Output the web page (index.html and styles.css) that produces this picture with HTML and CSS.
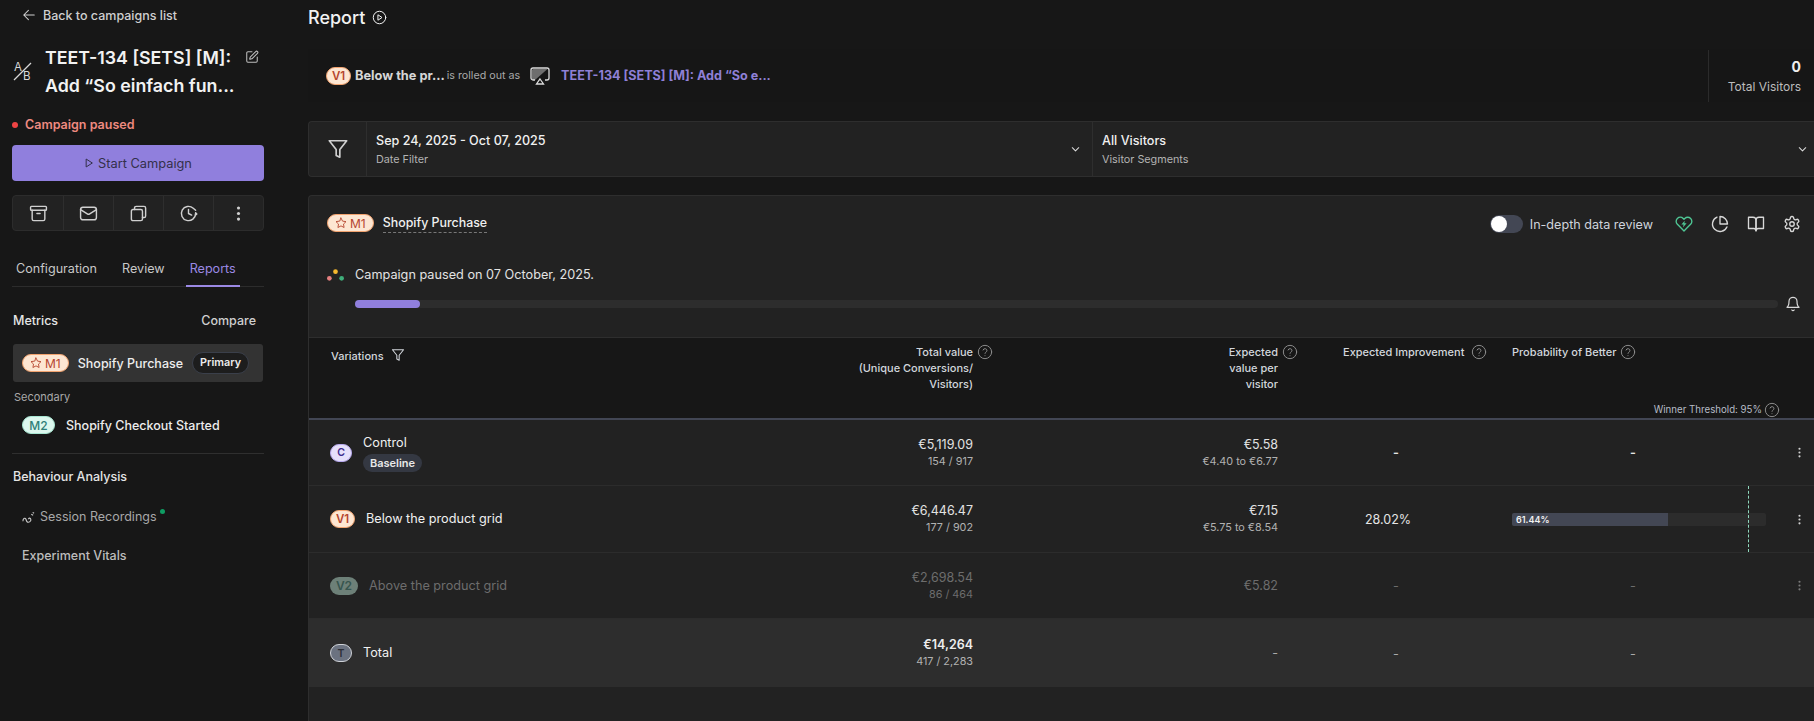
FILE: index.html
```html
<!DOCTYPE html>
<html lang="en">
<head>
  <meta charset="utf-8">
  <title>Report</title>
  <link rel="stylesheet" href="styles.css">
</head>
<body>
  <svg class="sprite" xmlns="http://www.w3.org/2000/svg">
    <symbol id="i-back" viewBox="0 0 24 24"><path d="M21 12H3M11 20l-8-8 8-8"/></symbol>
    <symbol id="i-edit" viewBox="0 0 24 24"><path d="M12 3H5a2 2 0 0 0-2 2v14a2 2 0 0 0 2 2h14a2 2 0 0 0 2-2v-7"/><path d="M18.375 2.625a1 1 0 0 1 3 3l-9.013 9.014a2 2 0 0 1-.853.505l-2.873.84a.5.5 0 0 1-.62-.62l.84-2.873a2 2 0 0 1 .506-.852z"/></symbol>
    <symbol id="i-tri" viewBox="0 0 12 12"><path d="M3 1.500 10 6l-7 4.500z"/></symbol>
    <symbol id="i-archive" viewBox="0 0 24 24"><path d="M3 3h18a1 1 0 0 1 1 1v3a1 1 0 0 1-1 1H3a1 1 0 0 1-1-1V4a1 1 0 0 1 1-1z"/><path d="M4 8v11a2 2 0 0 0 2 2h12a2 2 0 0 0 2-2V8"/><path d="M10 12h4"/></symbol>
    <symbol id="i-mail" viewBox="0 0 24 24"><rect x="2" y="4" width="20" height="16" rx="3"/><path d="m22 7-8.970 5.700a1.940 1.940 0 0 1-2.060 0L2 7"/></symbol>
    <symbol id="i-copy" viewBox="0 0 24 24"><rect x="3" y="7" width="14" height="14" rx="2"/><path d="M7 7V5a2 2 0 0 1 2-2h10a2 2 0 0 1 2 2v10a2 2 0 0 1-2 2h-2"/></symbol>
    <symbol id="i-history" viewBox="0 0 24 24"><path d="M21 12a9 9 0 1 1-3-6.700L21 8"/><path d="M12 7v5l4 2"/><path d="M21 11l1.500 1.500L21 14z"/></symbol>
    <symbol id="i-filter" viewBox="0 0 24 24"><path d="M2.500 3h19l-7.500 9.500V21l-4-2v-6.500z"/></symbol>
    <symbol id="i-chevron" viewBox="0 0 24 24"><path d="m5 8 7 7 7-7"/></symbol>
    <symbol id="i-play" viewBox="0 0 24 24"><circle cx="12" cy="12" r="10"/><path d="m10 8 6 4-6 4z"/></symbol>
    <symbol id="i-heart" viewBox="0 0 24 24"><path d="M20.840 4.610a5.500 5.500 0 0 0-7.780 0L12 5.670l-1.060-1.060a5.500 5.500 0 0 0-7.780 7.780l1.060 1.060L12 21.230l7.780-7.780 1.060-1.060a5.500 5.500 0 0 0 0-7.780z"/><path class="solid" d="M13 7.500 8.500 12.500h3L10.500 16.500l5-5.500h-3z"/></symbol>
    <symbol id="i-pie" viewBox="0 0 24 24"><path d="M21.210 15.890A10 10 0 1 1 8 2.830"/><path d="M22 12A10 10 0 0 0 12 2v10z"/></symbol>
    <symbol id="i-book" viewBox="0 0 24 24"><path d="M2 3h6a4 4 0 0 1 4 4v14a3 3 0 0 0-3-3H2z"/><path d="M22 3h-6a4 4 0 0 0-4 4v14a3 3 0 0 1 3-3h7z"/></symbol>
    <symbol id="i-gear" viewBox="0 0 24 24"><path d="M12.220 2h-.44a2 2 0 0 0-2 2v.18a2 2 0 0 1-1 1.730l-.43.25a2 2 0 0 1-2 0l-.15-.08a2 2 0 0 0-2.730.73l-.22.38a2 2 0 0 0 .73 2.730l.15.1a2 2 0 0 1 1 1.720v.51a2 2 0 0 1-1 1.740l-.15.09a2 2 0 0 0-.73 2.730l.22.38a2 2 0 0 0 2.730.73l.15-.08a2 2 0 0 1 2 0l.43.25a2 2 0 0 1 1 1.730V20a2 2 0 0 0 2 2h.44a2 2 0 0 0 2-2v-.18a2 2 0 0 1 1-1.730l.43-.25a2 2 0 0 1 2 0l.15.08a2 2 0 0 0 2.730-.73l.22-.39a2 2 0 0 0-.73-2.730l-.15-.08a2 2 0 0 1-1-1.740v-.5a2 2 0 0 1 1-1.740l.15-.09a2 2 0 0 0 .73-2.730l-.22-.38a2 2 0 0 0-2.730-.73l-.15.08a2 2 0 0 1-2 0l-.43-.25a2 2 0 0 1-1-1.730V4a2 2 0 0 0-2-2z"/><circle cx="12" cy="12" r="3"/></symbol>
    <symbol id="i-bell" viewBox="0 0 24 24"><path d="M6 8a6 6 0 0 1 12 0c0 7 3 9 3 9H3s3-2 3-9"/><path d="M10.300 21a1.940 1.940 0 0 0 3.400 0"/></symbol>
    <symbol id="i-help" viewBox="0 0 24 24"><circle cx="12" cy="12" r="10"/><path d="M9.090 9a3 3 0 0 1 5.830 1c0 2-3 2.500-3 4"/><path d="M12 17.500h.01"/></symbol>
    <symbol id="i-star" viewBox="0 0 24 24"><path d="M12 2l3.090 6.260L22 9.270l-5 4.870 1.180 6.880L12 17.770l-6.180 3.250L7 14.140 2 9.270l6.910-1.010z"/></symbol>
    <symbol id="i-dots" viewBox="0 0 24 24"><circle class="solid" cx="12" cy="5" r="2"/><circle class="solid" cx="12" cy="12" r="2"/><circle class="solid" cx="12" cy="19" r="2"/></symbol>
  </svg>

  <div class="app">
    <aside class="sidebar">
      <a class="back"><svg class="ico ico-14"><use href="#i-back"/></svg>Back to campaigns list</a>

      <div class="camp-title">
        <svg class="ab-icon" viewBox="0 0 20 20">
          <text x="1" y="10" class="ab-letter">A</text>
          <text x="10" y="19" class="ab-letter">B</text>
          <path d="M1 19 18 2"/>
        </svg>
        <h1>TEET-134 [SETS] [M]:<br>Add “So einfach fun...</h1>
        <svg class="ico ico-14 edit"><use href="#i-edit"/></svg>
      </div>

      <div class="status"><span class="status-dot"></span>Campaign paused</div>

      <button class="start"><svg class="ico ico-10"><use href="#i-tri"/></svg>Start Campaign</button>

      <div class="toolbar">
        <div><svg class="ico ico-19"><use href="#i-archive"/></svg></div>
        <div><svg class="ico ico-19"><use href="#i-mail"/></svg></div>
        <div><svg class="ico ico-19"><use href="#i-copy"/></svg></div>
        <div><svg class="ico ico-19"><use href="#i-history"/></svg></div>
        <div><svg class="ico ico-19"><use href="#i-dots"/></svg></div>
      </div>

      <nav class="tabs">
        <a>Configuration</a>
        <a>Review</a>
        <a class="active">Reports</a>
      </nav>

      <div class="metrics-head"><span>Metrics</span><span class="compare">Compare</span></div>

      <div class="metric-row selected">
        <span class="badge orange"><svg class="ico ico-12"><use href="#i-star"/></svg>M1</span>
        <span class="metric-name">Shopify Purchase</span>
        <span class="primary">Primary</span>
      </div>

      <div class="secondary">Secondary</div>
      <div class="metric-row second">
        <span class="badge mint">M2</span>
        <span class="metric-name plain">Shopify Checkout Started</span>
      </div>

      <div class="rule"></div>

      <div class="side-head">Behaviour Analysis</div>
      <div class="side-link">
        <svg class="squiggle" viewBox="0 0 14 14"><path d="M1 11c0-3 2-4 3-2.500s.5 3 2 3.500 4-1 3.500-3-2.500-1.500-2.500 0M10 3.500l2 1M11.500 1.500l1.500 1"/></svg>
        Session Recordings<span class="live-dot"></span>
      </div>
      <div class="side-link vitals">Experiment Vitals</div>
    </aside>

    <main class="content">
      <div class="page-title">Report <svg class="ico ico-15"><use href="#i-play"/></svg></div>

      <section class="rollout">
        <span class="badge orange small">V1</span>
        <b class="rollout-name">Below the pr...</b>
        <span class="rollout-as">is rolled out as</span>
        <svg class="airplay" viewBox="0 0 20 18">
          <path class="screen-fill" d="M3 2h14.500L5 13H3a1.500 1.500 0 0 1-1-1.500V3z"/>
          <path class="screen" d="M5 13H3a2 2 0 0 1-2-2V3a2 2 0 0 1 2-2h14a2 2 0 0 1 2 2v8a2 2 0 0 1-2 2h-2"/>
          <path class="screen" d="m10 12 3.500 5h-7z"/>
        </svg>
        <a class="rollout-link">TEET-134 [SETS] [M]: Add “So e...</a>
        <div class="visitors"><b>0</b><span>Total Visitors</span></div>
      </section>

      <section class="filters">
        <div class="filter-icon"><svg class="ico ico-22"><use href="#i-filter"/></svg></div>
        <div class="filter-cell date">
          <div><div class="filter-val">Sep 24, 2025 - Oct 07, 2025</div><div class="filter-lbl">Date Filter</div></div>
          <svg class="ico ico-11"><use href="#i-chevron"/></svg>
        </div>
        <div class="filter-cell seg">
          <div><div class="filter-val">All Visitors</div><div class="filter-lbl">Visitor Segments</div></div>
          <svg class="ico ico-11"><use href="#i-chevron"/></svg>
        </div>
      </section>

      <section class="report">
        <header class="report-head">
          <span class="badge orange"><svg class="ico ico-12"><use href="#i-star"/></svg>M1</span>
          <span class="report-name">Shopify Purchase</span>
          <div class="report-tools">
            <span class="toggle"><span class="knob"></span></span>
            <span class="toggle-lbl">In-depth data review</span>
            <svg class="ico ico-18 green"><use href="#i-heart"/></svg>
            <svg class="ico ico-18"><use href="#i-pie"/></svg>
            <svg class="ico ico-18"><use href="#i-book"/></svg>
            <svg class="ico ico-18"><use href="#i-gear"/></svg>
          </div>
        </header>

        <div class="paused-line">
          <svg class="dots3" viewBox="0 0 18 12"><circle cx="9" cy="2.500" r="2.500" fill="#f5b82e"/><circle cx="2.500" cy="9.500" r="2.500" fill="#e57f7f"/><circle cx="15.500" cy="9.500" r="2.500" fill="#3fae7a"/></svg>
          Campaign paused on 07 October, 2025.
        </div>
        <div class="progress-line">
          <div class="progress"><div class="progress-fill"></div></div>
          <svg class="ico ico-16"><use href="#i-bell"/></svg>
        </div>

        <div class="grid grid-head">
          <div class="th th-var">Variations <svg class="ico ico-14"><use href="#i-filter"/></svg></div>
          <div class="th num"><span class="th-main">Total value<br>(Unique Conversions/<br>Visitors)</span><svg class="ico ico-help"><use href="#i-help"/></svg></div>
          <div class="th num"><span class="th-main">Expected<br>value per<br>visitor</span><svg class="ico ico-help"><use href="#i-help"/></svg></div>
          <div class="th th-imp">Expected Improvement <svg class="ico ico-help"><use href="#i-help"/></svg></div>
          <div class="th th-prob">
            <div>Probability of Better <svg class="ico ico-help"><use href="#i-help"/></svg></div>
            <div class="threshold">Winner Threshold: 95% <svg class="ico ico-help"><use href="#i-help"/></svg></div>
          </div>
          <div></div>
        </div>

        <div class="grid row">
          <div class="cell-name"><span class="badge lilac">C</span><div><div class="var-name">Control</div><span class="baseline">Baseline</span></div></div>
          <div class="num"><div class="val">€5,119.09</div><div class="sub">154 / 917</div></div>
          <div class="num"><div class="val">€5.58</div><div class="sub">€4.40 to €6.77</div></div>
          <div class="dash">-</div>
          <div class="dash prob">-</div>
          <div class="menu"><svg class="ico ico-13"><use href="#i-dots"/></svg></div>
        </div>

        <div class="grid row row-tall">
          <div class="cell-name"><span class="badge orange small">V1</span><div class="var-name">Below the product grid</div></div>
          <div class="num"><div class="val">€6,446.47</div><div class="sub">177 / 902</div></div>
          <div class="num"><div class="val">€7.15</div><div class="sub">€5.75 to €8.54</div></div>
          <div class="pct">28.02%</div>
          <div class="bar-cell"><div class="bar"><div class="bar-fill" style="width:61.44%"></div><span class="bar-lbl">61.44%</span></div><span class="bar-mark"></span></div>
          <div class="menu"><svg class="ico ico-13"><use href="#i-dots"/></svg></div>
        </div>

        <div class="grid row dim">
          <div class="cell-name"><span class="badge sage">V2</span><div class="var-name">Above the product grid</div></div>
          <div class="num"><div class="val">€2,698.54</div><div class="sub">86 / 464</div></div>
          <div class="num"><div class="val">€5.82</div></div>
          <div class="dash">-</div>
          <div class="dash prob">-</div>
          <div class="menu"><svg class="ico ico-13"><use href="#i-dots"/></svg></div>
        </div>

        <div class="grid row total">
          <div class="cell-name"><span class="badge slate">T</span><div class="var-name">Total</div></div>
          <div class="num"><div class="val strong">€14,264</div><div class="sub">417 / 2,283</div></div>
          <div class="num"><div class="val muted">-</div></div>
          <div class="dash muted">-</div>
          <div class="dash prob muted">-</div>
          <div></div>
        </div>
      </section>
    </main>
  </div>
</body>
</html>
```

FILE: styles.css
```css
html,body {
  height: 100%;
  margin: 0;
  overflow: hidden;
  font-family: "Inter", "Noto Sans", sans-serif;
  font-size: 12.700px;
  color: #e5e5e5;
  background: #171717;
}
.sprite {
  display: none;
}
.ico {
  fill: none;
  stroke: currentColor;
  stroke-width: 1.800;
  stroke-linecap: round;
  stroke-linejoin: round;
  flex: none;
}
.solid {
  fill: currentColor;
  stroke: none;
}
.ico-10 { width: 10px; height: 10px; stroke-width: 1.200; }
.ico-11 { width: 11px; height: 11px; stroke-width: 2.200; }
.ico-12 { width: 12px; height: 12px; }
.ico-13 { width: 13px; height: 13px; }
.ico-14 { width: 14px; height: 14px; }
.ico-15 { width: 15px; height: 15px; stroke-width: 1.600; }
.ico-16 { width: 16px; height: 16px; }
.ico-18 { width: 18px; height: 18px; }
.ico-19 { width: 19px; height: 19px; }
.ico-22 { width: 22px; height: 22px; }
.ico-help {
  width: 16px;
  height: 16px;
  color: #8b8b8b;
  stroke-width: 1.500;
}
.app {
  display: flex;
  height: 721px;
}

/* sidebar */
.sidebar {
  width: 252px;
  flex: none;
  padding: 0 44px 0 12px;
}
.back {
  display: flex;
  align-items: center;
  gap: 7px;
  height: 16px;
  margin: 7px 0 0 10px;
  font-size: 12.500px;
  font-weight: 500;
  color: #cfcfcf;
}
.camp-title {
  display: flex;
  align-items: flex-start;
  margin-top: 21px;
}
.ab-icon {
  width: 20px;
  height: 20px;
  margin: 17px 12px 0 1px;
  flex: none;
  stroke: #d8d8d8;
  fill: none;
  stroke-width: 1.200;
  overflow: visible;
}
.ab-letter {
  font-size: 11.500px;
  fill: #d8d8d8;
  stroke: none;
}
.camp-title h1 {
  margin: 0;
  font-size: 17.800px;
  line-height: 28px;
  font-weight: 600;
  color: #f2f2f2;
  white-space: nowrap;
}
.edit {
  margin: 6px 0 0 11px;
  color: #bdbdbd;
}
.status {
  display: flex;
  align-items: center;
  gap: 7px;
  margin: 16px 0 0;
  font-weight: 600;
  font-size: 12.500px;
  line-height: 18px;
  color: #ee8a80;
}
.status-dot {
  width: 6px;
  height: 6px;
  border-radius: 50%;
  background: #ef4444;
}
.start {
  display: flex;
  align-items: center;
  justify-content: center;
  gap: 4px;
  width: 100%;
  height: 36px;
  margin-top: 11px;
  padding: 0;
  border: 0;
  border-radius: 4px;
  font-family: inherit;
  font-size: 12.800px;
  color: #33304a;
  background: #907fdd;
}
.toolbar {
  display: grid;
  grid-template-columns: repeat(5, 1fr);
  height: 36px;
  margin-top: 14px;
  border: 1px solid #2c2c2c;
  border-radius: 4px;
  box-sizing: border-box;
  background: #222;
}
.toolbar > div {
  display: flex;
  align-items: center;
  justify-content: center;
  color: #d0d0d0;
  border-left: 1px solid #2e2e2e;
}
.toolbar > div:first-child {
  border-left: 0;
}
.tabs {
  display: flex;
  gap: 25px;
  margin-top: 29px;
  padding: 0 4px;
  height: 26px;
  border-bottom: 1px solid #2c2c2c;
  font-size: 12.600px;
  line-height: 18px;
  color: #c8c8c8;
}
.tabs .active {
  position: relative;
  color: #9b89e4;
}
.tabs .active::after {
  content: "";
  position: absolute;
  left: -4px;
  right: -4px;
  top: 25px;
  height: 2px;
  background: #9b89e4;
}
.metrics-head {
  display: flex;
  justify-content: space-between;
  margin: 25px 8px 0 1px;
  font-size: 12.500px;
  line-height: 18px;
  font-weight: 500;
}
.compare {
  color: #cfcfcf;
}
.metric-row {
  display: flex;
  align-items: center;
}
.metric-row.selected {
  height: 38px;
  margin: 14px 1px 0;
  padding-left: 9px;
  border-radius: 3px;
  background: #333;
}
.metric-name {
  margin-left: 9px;
  font-size: 12.500px;
  font-weight: 500;
  color: #ededed;
  white-space: nowrap;
}
.metric-name.plain {
  margin-left: 11px;
}
.primary {
  margin-left: 9px;
  padding: 0 7px;
  height: 20px;
  line-height: 19px;
  border: 1px solid #3a3f4a;
  border-radius: 11px;
  font-size: 10.800px;
  font-weight: 600;
  color: #ececec;
  background: #1d1d1d;
}
.secondary {
  margin: 7px 0 0 2px;
  font-size: 11px;
  line-height: 16px;
  color: #a9a9a9;
}
.metric-row.second {
  margin-top: 10px;
  padding-left: 10px;
  height: 20px;
}
.rule {
  height: 1px;
  margin-top: 18px;
  background: #2f2f2f;
}
.side-head {
  margin: 14px 0 0 1px;
  font-size: 12.500px;
  line-height: 18px;
  font-weight: 500;
}
.side-link {
  display: flex;
  align-items: center;
  margin: 22px 0 0 10px;
  font-size: 12.500px;
  line-height: 18px;
  color: #a8a8a8;
}
.side-link.vitals {
  margin-top: 21px;
  font-weight: 500;
  color: #bdbdbd;
}
.squiggle {
  width: 13px;
  height: 13px;
  margin-right: 5px;
  stroke: #c9c9c9;
  fill: none;
  stroke-width: 1.200;
}
.live-dot {
  width: 5px;
  height: 5px;
  margin: -11px 0 0 3px;
  border-radius: 50%;
  background: #0f9d63;
}

/* main */
.content {
  flex: 1;
  min-width: 0;
}
.page-title {
  display: flex;
  align-items: center;
  gap: 7px;
  height: 34px;
  font-size: 18px;
  font-weight: 500;
  color: #f2f2f2;
}
.rollout {
  display: flex;
  align-items: center;
  height: 53px;
  margin-top: 15px;
  padding-left: 18px;
  background: #161616;
}
.rollout-name {
  margin-left: 4px;
  font-weight: 700;
  font-size: 12.800px;
  color: #d6d6d6;
}
.rollout-as {
  margin-left: 2px;
  font-size: 10.700px;
  color: #a9a9a9;
}
.airplay {
  width: 20px;
  height: 18px;
  margin-left: 10px;
}
.airplay .screen {
  fill: none;
  stroke: #dcdcdc;
  stroke-width: 1.300;
}
.airplay .screen-fill {
  fill: #6e6e6e;
}
.rollout-link {
  margin-left: 11px;
  font-size: 12.600px;
  font-weight: 700;
  color: #8f80d6;
}
.visitors {
  display: flex;
  flex-direction: column;
  align-items: flex-end;
  gap: 4px;
  margin-left: auto;
  width: 92px;
  height: 52px;
  padding-right: 13px;
  border-left: 1px solid #2b2b2b;
  font-size: 12px;
  line-height: 16px;
  color: #bdbdbd;
}
.visitors b {
  margin-top: 9px;
  font-size: 14px;
  color: #eee;
}
.filters {
  display: flex;
  height: 56px;
  margin-top: 19px;
  box-sizing: border-box;
  border: 1px solid #2e2e2e;
  border-right: 0;
  border-radius: 4px 0 0 4px;
  background: #222;
}
.filter-icon {
  display: flex;
  align-items: center;
  justify-content: center;
  width: 57px;
  color: #d0d0d0;
}
.filter-cell {
  display: flex;
  align-items: center;
  justify-content: space-between;
  padding: 0 9px;
  border-left: 1px solid #2e2e2e;
  color: #dedede;
}
.filter-cell.date {
  width: 726px;
  box-sizing: border-box;
  padding-right: 11px;
}
.filter-cell.seg {
  flex: 1;
  padding-right: 6px;
}
.filter-val {
  font-size: 12.600px;
  font-weight: 500;
  line-height: 18px;
  color: #f0f0f0;
}
.filter-lbl {
  margin-top: 3px;
  font-size: 10.800px;
  line-height: 14px;
  color: #b3b3b3;
}
.report {
  height: 526px;
  margin-top: 18px;
  box-sizing: border-box;
  border: 1px solid #2e2e2e;
  border-right: 0;
  border-bottom: 0;
  border-radius: 4px 0 0 0;
  background: #222;
}
.report-head {
  display: flex;
  align-items: center;
  height: 36px;
  padding: 0 13px 0 18px;
  margin-top: 9px;
}
.report-name {
  margin-left: 9px;
  font-size: 12.400px;
  font-weight: 500;
  color: #f0f0f0;
  border-bottom: 1px dashed #777;
  line-height: 18px;
}
.report-tools {
  display: flex;
  align-items: center;
  gap: 18px;
  margin: 2px 0 0 auto;
  color: #d8d8d8;
}
.toggle {
  width: 33px;
  height: 18px;
  margin-right: -11px;
  border-radius: 9px;
  background: #434754;
}
.knob {
  display: block;
  width: 16px;
  height: 16px;
  margin: 1px;
  border-radius: 50%;
  background: #fff;
}
.toggle-lbl {
  margin-right: 4px;
  font-size: 12.600px;
  color: #cfd4dc;
}
.green {
  color: #4fc795;
}
.paused-line {
  display: flex;
  align-items: center;
  gap: 11px;
  margin-top: 25px;
  padding-left: 18px;
  line-height: 18px;
  color: #e3e3e3;
}
.dots3 {
  width: 17px;
  height: 12px;
}
.progress-line {
  display: flex;
  align-items: center;
  gap: 7px;
  padding: 0 13px 0 46px;
  margin-top: 12px;
  color: #d8d8d8;
}
.progress {
  flex: 1;
  height: 8px;
  border-radius: 4px;
  background: #2d2d2d;
}
.progress-fill {
  width: 65px;
  height: 8px;
  border-radius: 4px;
  background: #907fdd;
}

/* table */
.grid {
  display: grid;
  grid-template-columns: 350px 341px 305px 195px 280px 1fr;
}
.grid-head {
  height: 83px;
  margin-top: 25px;
  box-sizing: border-box;
  border-top: 1px solid #2e2e2e;
  border-bottom: 2px solid #424654;
  background: #171717;
  font-size: 11px;
  font-weight: 500;
  line-height: 16px;
  color: #d2d6dc;
}
.th {
  padding-top: 6px;
}
.th-var {
  display: flex;
  align-items: flex-start;
  gap: 7px;
  padding-left: 22px;
  padding-top: 10px;
}
.th.num {
  display: flex;
  justify-content: flex-end;
  align-items: flex-start;
  gap: 4px;
  padding-right: 7px;
  text-align: right;
}
.th-imp {
  display: flex;
  align-items: flex-start;
  gap: 7px;
  padding-left: 38px;
}
.th-prob {
  display: flex;
  flex-direction: column;
  justify-content: space-between;
  padding-left: 12px;
}
.th-prob > div {
  display: flex;
  align-items: flex-start;
  gap: 4px;
}
.th-prob .threshold {
  align-self: flex-end;
  align-items: center;
  gap: 2px;
  font-size: 9.700px;
  font-weight: 400;
  color: #b6bcc6;
}
.row {
  height: 66px;
  box-sizing: border-box;
  align-items: center;
  border-bottom: 1px solid #2c2c2c;
}
.row-tall {
  height: 67px;
}
.row:last-child {
  height: 68px;
  border-bottom: 0;
}
.total {
  background: #2d2d2d;
}
.cell-name {
  display: flex;
  align-items: center;
  gap: 11px;
  padding-left: 21px;
}
.var-name {
  font-weight: 400;
  line-height: 18px;
  color: #f0f0f0;
}
.baseline {
  display: inline-block;
  height: 18px;
  margin-top: 2px;
  padding: 0 7px;
  border-radius: 9px;
  font-size: 11px;
  font-weight: 600;
  line-height: 18px;
  color: #e8e8e8;
  background: #343842;
}
.num {
  padding-right: 27px;
  text-align: right;
}
.val {
  font-size: 12.500px;
  line-height: 18px;
  color: #e2e2e2;
}
.val.strong {
  font-weight: 600;
  color: #ededed;
}
.sub {
  font-size: 10.800px;
  line-height: 16px;
  color: #b1b1b1;
}
.dash,
.pct {
  padding-left: 88px;
  font-weight: 600;
  color: #e5e5e5;
}
.dash.prob {
  padding-left: 130px;
}
.pct {
  padding-left: 60px;
  font-size: 12.500px;
  font-weight: 400;
}
.muted,
.dash.muted {
  font-weight: 400;
  color: #aaa;
}
.menu {
  display: flex;
  justify-content: center;
  padding-left: 4px;
  color: #d0d0d0;
}
.dim .val,
.dim .sub,
.dim .var-name,
.dim .dash {
  color: #6d6d6d;
  font-weight: 400;
}
.dim .menu {
  color: #7a7a7a;
}
.bar-cell {
  position: relative;
  height: 100%;
  display: flex;
  align-items: center;
  padding-left: 12px;
}
.bar {
  position: relative;
  width: 254px;
  height: 13px;
  border-radius: 2px;
  background: #2c2c2c;
}
.bar-fill {
  height: 13px;
  border-radius: 2px 0 0 2px;
  background: #434754;
}
.bar-lbl {
  position: absolute;
  left: 4px;
  top: 0;
  font-size: 9px;
  font-weight: 600;
  line-height: 13px;
  color: #f2f2f2;
}
.bar-mark {
  position: absolute;
  left: 248px;
  top: 0;
  bottom: 0;
  border-left: 1px dashed #8fd8bd;
}

/* badges */
.badge {
  display: inline-flex;
  align-items: center;
  justify-content: center;
  gap: 3px;
  height: 18px;
  padding: 0 7px;
  box-sizing: border-box;
  border-radius: 9px;
  font-size: 12px;
  font-weight: 400;
  flex: none;
}
.badge.small {
  padding: 0 4px;
  font-size: 11.500px;
  font-weight: 600;
  width: 25px;
}
.orange {
  color: #b5452f;
  background: #fde6d2;
  border: 1px solid #f2a36f;
}
.mint {
  width: 33px;
  font-weight: 500;
  color: #2f7f78;
  background: #dcf7ee;
  border: 1px solid #a8e6d2;
}
.lilac {
  width: 22px;
  padding: 0;
  font-size: 10.500px;
  font-weight: 600;
  color: #3b2a8c;
  background: #e6e0fb;
  border: 1px solid #b7a9ee;
}
.sage {
  width: 28px;
  padding: 0;
  font-weight: 600;
  color: #37554f;
  background: #6d8078;
}
.slate {
  width: 22px;
  padding: 0;
  font-size: 10.500px;
  font-weight: 600;
  color: #2c2f38;
  background: #6b7280;
  border: 1px solid #cfd2d8;
}
```
